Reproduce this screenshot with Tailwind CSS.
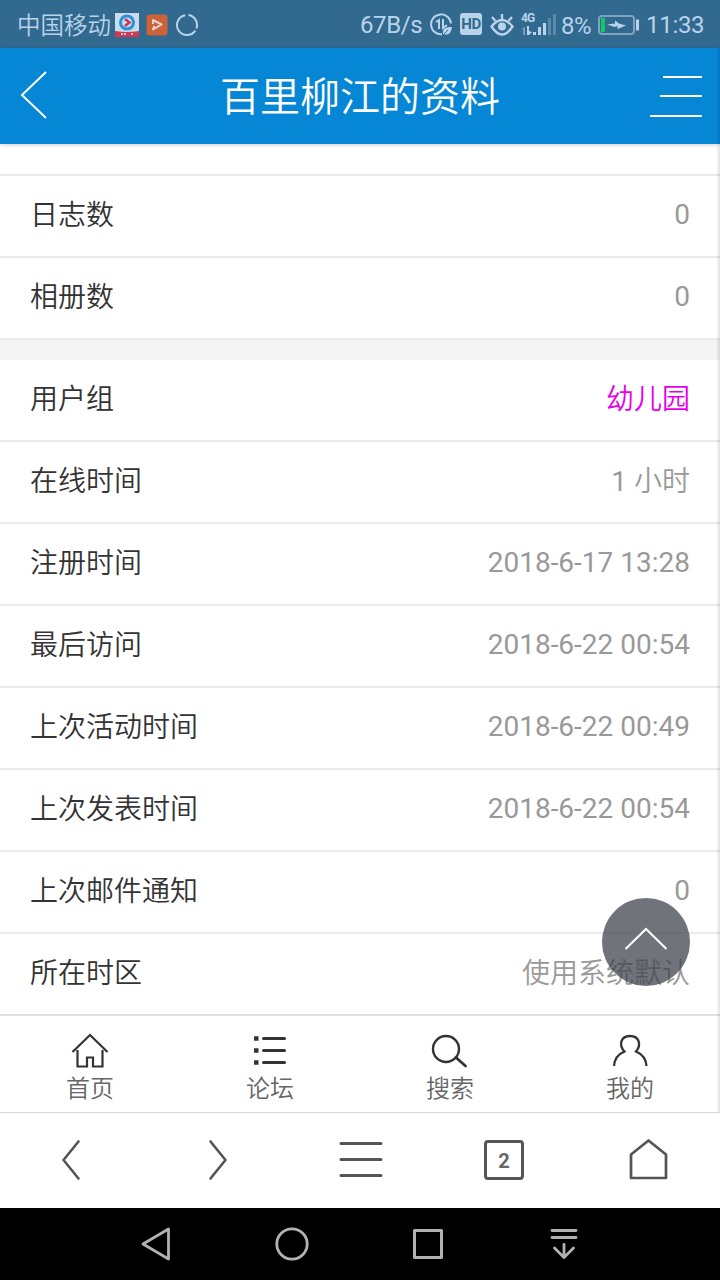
<!DOCTYPE html>
<html lang="zh-CN">
<head>
    <meta charset="UTF-8">
    <meta name="viewport" content="width=device-width, initial-scale=1.0">
    <title>百里柳江的资料</title>
    <script src="https://cdn.jsdelivr.net/npm/@tailwindcss/browser@4"></script>
</head>
<body class="relative w-[720px] h-[1280px] overflow-hidden bg-white flex flex-col font-['Roboto','Noto_Sans_CJK_SC',sans-serif] whitespace-nowrap">

    <!-- status bar -->
    <div class="h-12 shrink-0 bg-[#32698f] text-[#b9d3ea] flex items-center justify-between pl-[17px] pr-4 pt-0.5">
        <div class="flex items-center">
            <span class="w-[98px] pt-0.5 text-[23.5px] leading-8 font-[350]">中国移动</span>
            <svg class="w-6 h-6" viewBox="0 0 24 24">
                <path fill="#c8dcea" d="M0 0h24v24H0z"/>
                <circle cx="12" cy="9.5" r="6.5" fill="none" stroke="#2f8fdc" stroke-width="3"/>
                <path d="M10 6l4.500 3.500L10 13" fill="none" stroke="#cf3350" stroke-width="2.400"/>
                <path fill="#cc3a55" d="M0 18q12 2 24 0v6H0z"/>
                <path stroke="#e8bccb" stroke-width="2" d="M6 21h2M9 21h2M16 21h2"/>
            </svg>
            <svg class="w-[22px] h-[22px] ml-[7px]" viewBox="0 0 22 22">
                <rect x=".5" y=".5" width="21" height="21" rx="3" fill="#cc6239"/>
                <path d="M7 10V6l8.500 4.500L7 15.500l1.500-3.500" fill="none" stroke="#e5d4cd" stroke-width="2" stroke-linejoin="round"/>
            </svg>
            <svg class="w-6 h-6 ml-[7px]" viewBox="0 0 24 24" fill="none" stroke="#b9d3ea" stroke-width="2">
                <path d="M13.500 2.100A10 10 0 0 1 21.400 15.500M20.300 17.600A10 10 0 1 1 10.200 2.200"/>
            </svg>
        </div>
        <div class="flex items-center">
            <span class="w-[70px] text-[24px] leading-8 tracking-[-0.4px]">67B/s</span>
            <svg class="w-[24px] h-[24px]" viewBox="0 0 24 24" fill="none" stroke="#b9d3ea" stroke-width="2">
                <path d="M21 10.500A10 10 0 1 0 12 21.300"/>
                <path d="M6 9l3-2v9M13 6v9l4-3"/>
                <path d="M13 21c-1-6 3-7 9-7-1 6-3 9-9 7z" fill="#b9d3ea" stroke="none"/>
                <path d="M12 23l6-6" stroke="#32698f" stroke-width="1"/>
            </svg>
            <span class="ml-1.5 mb-0.5 w-[22px] h-[22px] rounded-[3px] bg-[#b9d3ea] text-[#32698f] text-[15px] leading-[22px] tracking-[-0.5px] font-bold text-center">HD</span>
            <svg class="w-[24px] h-[24px] ml-2" viewBox="0 0 24 24" fill="none" stroke="#b9d3ea" stroke-width="2.400">
                <path d="M1.500 13.500q10.500-13 21 0-10.500 16-21 0z"/>
                <path d="M12 6V1M5.500 8L2 4M18.500 8L22 4"/>
                <circle cx="12" cy="13.500" r="4" fill="#b9d3ea" stroke="none"/>
            </svg>
            <div class="relative w-[35px] h-6 ml-[7px]">
                <span class="absolute left-0 top-0 text-[12px] leading-[10px] font-bold tracking-[-0.8px]">4G</span>
                <svg class="w-[35px] h-6" viewBox="0 0 35 24" fill="#b9d3ea">
                    <path opacity=".5" d="M0 16l4-2v8H2v-6H0z"/>
                    <path d="M6 13h2v5l3 1-3 3H6z"/>
                    <path d="M12 19h3v3h-3zM17 14h3v8h-3zM22 10h3v12h-3z"/>
                    <path opacity=".3" d="M27 5h3v17h-3zM32 1h3v21h-3z"/>
                </svg>
            </div>
            <span class="ml-[5px] w-[37px] pt-0.5 text-[24px] leading-8 tracking-[-0.5px]">8%</span>
            <svg class="w-[41px] h-[20px]" viewBox="0 0 41 20">
                <rect x="1" y="1" width="35" height="18" rx="3" fill="none" stroke="#7fa3be" stroke-width="2"/>
                <path fill="#0ecb60" d="M3 3h4v14H3z"/>
                <path fill="#b9d3ea" d="M9 9.500l8-1V5.500l4 3 7 2-8.500 3.500v-3l-3 1zM38 4.500h3v11h-3z"/>
            </svg>
            <span class="ml-[7px] w-[58px] text-[24px] leading-8 tracking-[-0.3px]">11:33</span>
        </div>
    </div>

    <!-- title bar -->
    <header class="relative z-10 h-24 shrink-0 bg-[#0587d6] text-white shadow-[0_1px_4px_rgba(0,0,0,0.2)] flex items-center justify-between pl-5 pr-[18px]">
        <svg class="w-[52px] h-12 mb-0.5" viewBox="0 0 52 48" fill="none" stroke="#fff" stroke-width="2">
            <path d="M26 1L2 24l24 23"/>
        </svg>
        <h1 class="pt-[3px] pr-0.5 text-[40px] leading-none font-[350]">百里柳江的资料</h1>
        <div class="w-[52px] flex flex-col items-end gap-[17.5px]">
            <i class="w-[39px] h-[2px] bg-white"></i>
            <i class="w-[42px] h-[2px] bg-white"></i>
            <i class="w-[52px] h-[2px] bg-white"></i>
        </div>
    </header>

    <!-- profile list -->
    <main class="relative h-[872px] shrink-0 text-[28px] text-[#999]">
        <div class="h-8 flex items-end">
            <div class="w-full h-[82px] border-b-2 border-[#ebebeb] px-[30px] flex items-center justify-between"><span class="pb-[6px] font-[350] text-[#333]">回帖数</span></div>
        </div>
        <div class="h-[82px] border-b-2 border-[#ebebeb] px-[30px] flex items-center justify-between"><span class="font-[350] text-[#333]">日志数</span><span class="pb-0.5">0</span></div>
        <div class="h-[82px] border-b-2 border-[#ebebeb] px-[30px] flex items-center justify-between"><span class="font-[350] text-[#333]">相册数</span><span class="pb-0.5">0</span></div>
        <div class="h-5 bg-[#f4f4f4]"></div>
        <div class="h-[82px] border-b-2 border-[#ebebeb] px-[30px] flex items-center justify-between"><span class="font-[350] text-[#333]">用户组</span><span class="font-[350] text-[#e800e8]">幼儿园</span></div>
        <div class="h-[82px] border-b-2 border-[#ebebeb] px-[30px] flex items-center justify-between"><span class="font-[350] text-[#333]">在线时间</span><span>1 <span class="font-[350]">小时</span></span></div>
        <div class="h-[82px] border-b-2 border-[#ebebeb] px-[30px] flex items-center justify-between"><span class="font-[350] text-[#333]">注册时间</span><span class="pb-0.5">2018-6-17 13:28</span></div>
        <div class="h-[82px] border-b-2 border-[#ebebeb] px-[30px] flex items-center justify-between"><span class="font-[350] text-[#333]">最后访问</span><span class="pb-0.5">2018-6-22 00:54</span></div>
        <div class="h-[82px] border-b-2 border-[#ebebeb] px-[30px] flex items-center justify-between"><span class="font-[350] text-[#333]">上次活动时间</span><span class="pb-0.5">2018-6-22 00:49</span></div>
        <div class="h-[82px] border-b-2 border-[#ebebeb] px-[30px] flex items-center justify-between"><span class="font-[350] text-[#333]">上次发表时间</span><span class="pb-0.5">2018-6-22 00:54</span></div>
        <div class="h-[82px] border-b-2 border-[#ebebeb] px-[30px] flex items-center justify-between"><span class="font-[350] text-[#333]">上次邮件通知</span><span class="pb-0.5">0</span></div>
        <div class="h-[82px] border-b-2 border-[#dfdfdf] px-[30px] flex items-center justify-between"><span class="font-[350] text-[#333]">所在时区</span><span class="font-[350]">使用系统默认</span></div>

        <!-- back to top -->
        <a class="absolute right-[30px] bottom-[30px] w-[88px] h-[88px] rounded-full bg-[#40444e]/75 flex items-center justify-center">
            <svg class="w-11 h-6 mb-1.5" viewBox="0 0 44 24" fill="none" stroke="#fff" stroke-width="2">
                <path d="M1.500 22L22 2l20.500 20"/>
            </svg>
        </a>
    </main>

    <!-- site tabs -->
    <nav class="h-[97px] shrink-0 border-b border-[#d9d9d9] grid grid-cols-4 text-[24px] leading-[34px] font-[350] text-[#666] pt-4">
        <a class="flex flex-col items-center">
            <svg class="w-10 h-10" viewBox="0 0 40 40" fill="none" stroke="#333" stroke-width="2.200">
                <path d="M2.500 20L20 3l17.500 17M7.500 18v16.500h9.500v-9h6v9h9.500V18"/>
            </svg>
            <span>首页</span>
        </a>
        <a class="flex flex-col items-center">
            <svg class="w-10 h-10" viewBox="0 0 40 40" fill="none" stroke="#333">
                <path stroke-width="3" stroke-linecap="round" d="M13.500 6.500h21M13.500 18.500h21M13.500 30.500h21"/>
                <path stroke-width="4.500" d="M4 6.500h4.500M4 18.500h4.500M4 30.500h4.500"/>
            </svg>
            <span>论坛</span>
        </a>
        <a class="flex flex-col items-center">
            <svg class="w-10 h-10" viewBox="0 0 40 40" fill="none" stroke="#333">
                <circle cx="16" cy="17" r="13" stroke-width="2.400"/>
                <path stroke-width="2.800" stroke-linecap="round" d="M26 25.500l9.500 8.500"/>
            </svg>
            <span>搜索</span>
        </a>
        <a class="flex flex-col items-center">
            <svg class="w-10 h-10" viewBox="0 0 40 40" fill="none" stroke="#333" stroke-width="2.300">
                <path d="M4 34c.5-7 4.500-12 10.500-14.500C8.500 13 10.500 4 20 4s11.500 9 6 15.500C32 22 36 27 36.500 34"/>
            </svg>
            <span>我的</span>
        </a>
    </nav>

    <!-- browser toolbar -->
    <nav class="h-[95px] shrink-0 pb-[1px] grid grid-cols-5 items-center justify-items-center">
        <svg class="w-6 h-12" viewBox="0 0 24 48" fill="none" stroke="#555" stroke-width="2.600" stroke-linecap="round" stroke-linejoin="round">
            <path d="M18.500 5.500L3.500 24l15 18.500"/>
        </svg>
        <svg class="w-6 h-12" viewBox="0 0 24 48" fill="none" stroke="#555" stroke-width="2.600" stroke-linecap="round" stroke-linejoin="round">
            <path d="M6.500 5.500l15 18.500-15 18.500"/>
        </svg>
        <svg class="w-12 h-12" viewBox="0 0 48 48" stroke="#555" stroke-width="3" stroke-linecap="round">
            <path d="M5 7.500h40M5 23.500h40M5 39.500h40"/>
        </svg>
        <span class="w-10 h-10 border-[3px] border-[#555] rounded-[4px] text-[20px] leading-[36px] font-bold text-[#666] text-center">2</span>
        <svg class="w-12 h-12" viewBox="0 0 48 48" fill="none" stroke="#555" stroke-width="2.700" stroke-linejoin="round">
            <path d="M7 18.500L24.500 4.500 42 18.500V42H7z"/>
        </svg>
    </nav>

    <!-- system keys -->
    <nav class="h-[72px] shrink-0 bg-black px-[88px] grid grid-cols-4 items-center justify-items-center">
        <svg class="w-10 h-10" viewBox="0 0 40 40" fill="none" stroke="#b2b2b2" stroke-width="2.800" stroke-linejoin="round">
            <path d="M32.500 5v30L7 20z"/>
        </svg>
        <svg class="w-10 h-10" viewBox="0 0 40 40" fill="none" stroke="#b2b2b2" stroke-width="2.800">
            <circle cx="20" cy="20" r="15.200"/>
        </svg>
        <svg class="w-10 h-10" viewBox="0 0 40 40" fill="none" stroke="#b2b2b2" stroke-width="3" stroke-linejoin="round">
            <path d="M6.500 6.500h27v27h-27z"/>
        </svg>
        <svg class="w-10 h-10" viewBox="0 0 40 40" fill="none" stroke="#b2b2b2" stroke-width="2.800" stroke-linecap="round" stroke-linejoin="round">
            <path d="M8 6.500h24M8 13.500h24M20 20.500v13M10.500 24l9.500 9.500 9.500-9.500"/>
        </svg>
    </nav>

    <!-- page edge shadow -->
    <div class="absolute z-20 right-0 top-12 w-1 h-[1064px] bg-linear-to-l from-black/12 to-transparent"></div>
</body>
</html>
